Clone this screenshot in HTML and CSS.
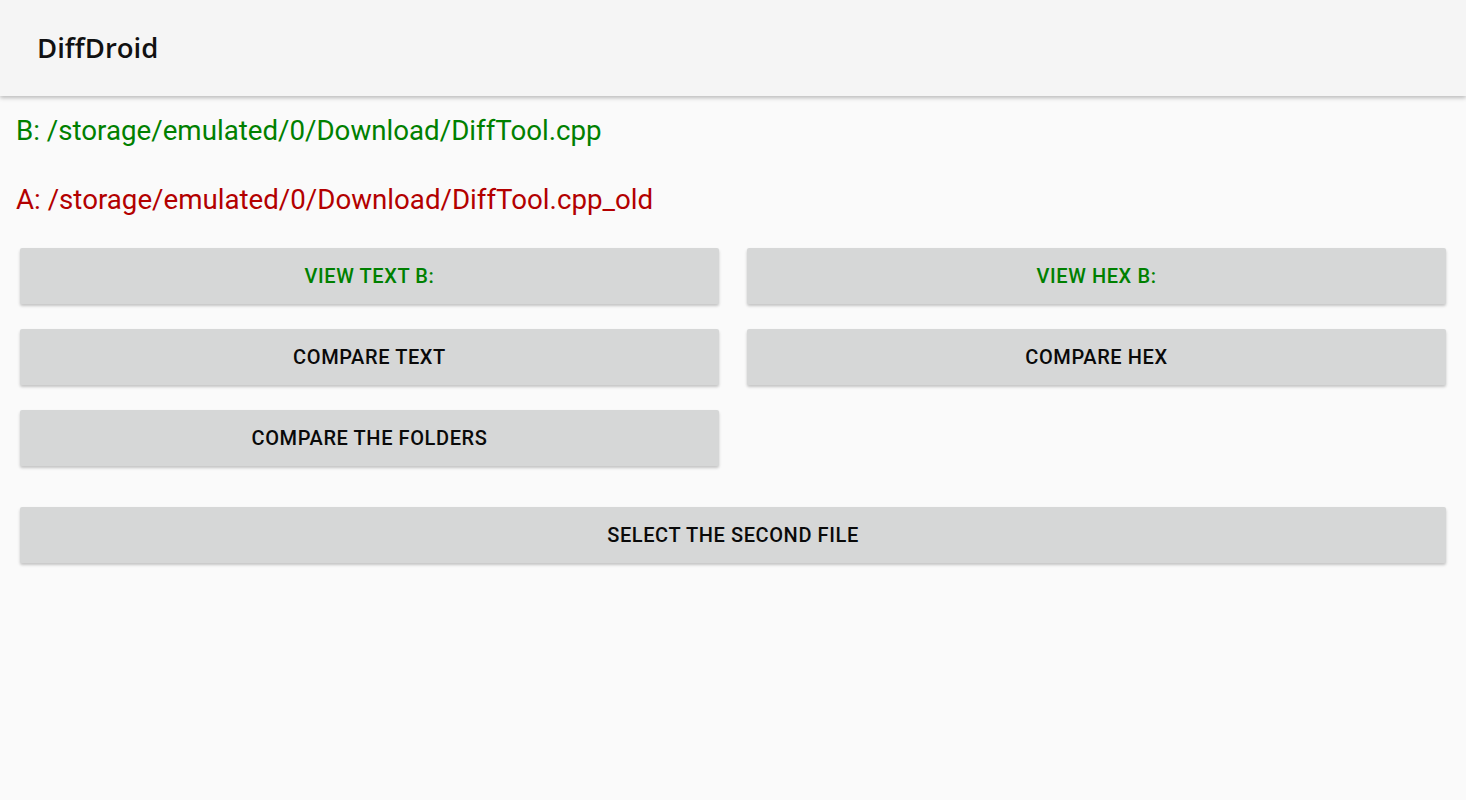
FILE: index.html
```html
<!DOCTYPE html>
<html lang="en">
<head>
    <meta charset="UTF-8">
    <title>DiffDroid</title>
    <link rel="stylesheet" href="styles.css">
</head>
<body>
    <!-- App bar -->
    <div class="app-bar">
        <div class="app-title">DiffDroid</div>
    </div>

    <div class="content">
        <div class="path path-b">B: /storage/emulated/0/Download/DiffTool.cpp</div>
        <div class="path path-a">A: /storage/emulated/0/Download/DiffTool.cpp_old</div>

        <div class="button-grid">
            <button class="btn btn-green">VIEW TEXT B:</button>
            <button class="btn btn-green">VIEW HEX B:</button>
            <button class="btn">COMPARE TEXT</button>
            <button class="btn">COMPARE HEX</button>
            <button class="btn">COMPARE THE FOLDERS</button>
        </div>

        <button class="btn btn-wide">SELECT THE SECOND FILE</button>
    </div>
</body>
</html>
```

FILE: styles.css
```css
/* Basic reset */
* {
    margin: 0;
    padding: 0;
    box-sizing: border-box;
}

html, body {
    height: 100%;
    overflow: hidden;
}

body {
    background-color: #fafafa;
    font-family: Roboto, sans-serif;
}

/* App bar */
.app-bar {
    height: 96px;
    background-color: #f5f5f5;
    display: flex;
    align-items: center;
    padding-left: 37px;
    box-shadow: 0 2px 4px rgba(0, 0, 0, 0.25);
    position: relative;
    z-index: 1;
}

.app-title {
    font-family: 'Open Sans', sans-serif;
    font-size: 27.5px;
    font-weight: 600;
    color: #111;
    margin-top: -2px;
}

/* Content */
.content {
    padding: 16px 20px 0 16px;
}

.path {
    font-size: 27.7px;
    line-height: 38px;
}

.path-b {
    color: #008000;
}

.path-a {
    color: #b30000;
    margin-top: 31px;
}

/* Buttons */
.button-grid {
    display: grid;
    grid-template-columns: 1fr 1fr;
    column-gap: 28px;
    row-gap: 25px;
    margin-top: 29px;
    padding-left: 4px;
}

.btn {
    height: 56px;
    border: none;
    border-radius: 2px;
    background-color: #d6d7d7;
    box-shadow: 0 2px 3px rgba(0, 0, 0, 0.22);
    font-family: Roboto, sans-serif;
    font-size: 20px;
    font-weight: 500;
    color: #0a0a0a;
    letter-spacing: 0.6px;
}

.btn-green {
    color: #008000;
}

.btn-wide {
    display: block;
    width: calc(100% - 4px);
    margin-top: 41px;
    margin-left: 4px;
}
```
